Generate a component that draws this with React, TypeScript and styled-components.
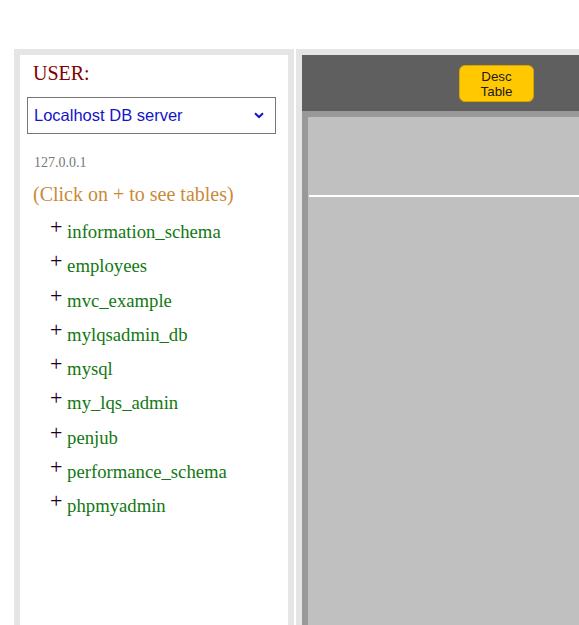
import React from "react";
import styled, { createGlobalStyle } from "styled-components";

const GlobalStyle = createGlobalStyle`
  html, body {
    margin: 0;
    padding: 0;
    background: #ffffff;
    overflow: hidden;
  }
  body {
    font-family: "Liberation Serif", "Times New Roman", serif;
  }
`;

const Page = styled.div`
  padding: 49px 0 0 14px;
  display: flex;
  gap: 2px;
  width: 800px;
  height: 700px;
  box-sizing: border-box;
`;

const Cell = styled.div<{ $width: number }>`
  background: #e5e5e5;
  padding: 6px;
  width: ${(p) => p.$width}px;
  box-sizing: border-box;
  display: flex;
  flex-direction: column;
`;

const Sidebar = styled.div`
  background: #ffffff;
  flex: 1;
  padding: 7px 0 0 0;
  display: flex;
  flex-direction: column;
`;

const UserLabel = styled.div`
  color: #800000;
  font-size: 20px;
  line-height: 23px;
  padding-left: 13px;
`;

const SelectBox = styled.div`
  margin: 12px 0 0 7px;
  width: 249px;
  height: 37px;
  box-sizing: border-box;
  border: 1px solid #767676;
  display: flex;
  align-items: center;
  justify-content: space-between;
  padding: 0 11px 0 6px;
  font-family: "Liberation Sans", Arial, sans-serif;
  font-size: 16.5px;
  color: #1414c8;
`;

const HostText = styled.div`
  color: #777777;
  font-size: 14px;
  line-height: 16px;
  padding-left: 14px;
  margin-top: 21px;
`;

const Hint = styled.div`
  color: #c98a3a;
  font-size: 20px;
  line-height: 23px;
  padding-left: 13px;
  margin-top: 12px;
`;

const DbList = styled.ul`
  list-style: none;
  margin: 4px 0 0 0;
  padding: 0 0 0 30px;
`;

const DbItem = styled.li`
  height: 34.25px;
  font-size: 18.7px;
  line-height: 34.25px;
  white-space: nowrap;
`;

const Plus = styled.span`
  color: #200020;
  font-size: 22px;
  vertical-align: 3.5px;
`;

const DbName = styled.span`
  color: #127812;
`;

const Main = styled.div`
  flex: 1;
  display: flex;
  flex-direction: column;
`;

const Toolbar = styled.div`
  background: #5f5f5f;
  height: 56px;
  box-sizing: border-box;
  padding: 10px 0 0 157px;
  display: flex;
  align-items: flex-start;
`;

const ActionButton = styled.button`
  width: 75px;
  height: 37px;
  box-sizing: border-box;
  background: #ffc800;
  border: 1px solid #d9a300;
  border-radius: 6px;
  font-family: "Liberation Sans", Arial, sans-serif;
  font-size: 13.33px;
  line-height: 15px;
  color: #1a1a1a;
  padding: 2px 4px;
  cursor: pointer;
`;

const Content = styled.div`
  flex: 1;
  background: #c0c0c0;
  border-top: 6px solid #999999;
  border-left: 6px solid #999999;
`;

const ResultTop = styled.div`
  height: 78px;
  margin-left: 1px;
  border-bottom: 2px solid #ffffff;
`;

const databases = [
  "information_schema",
  "employees",
  "mvc_example",
  "mylqsadmin_db",
  "mysql",
  "my_lqs_admin",
  "penjub",
  "performance_schema",
  "phpmyadmin",
];

const Chevron = () => (
  <svg width="10" height="7" viewBox="0 0 10 7" aria-hidden="true">
    <path d="M1 1.2 L5 5 L9 1.2" fill="none" stroke="#1414c8" strokeWidth="2" />
  </svg>
);

export default function App() {
  return (
    <>
      <GlobalStyle />
      <Page>
        <Cell $width={280}>
          <Sidebar>
            <UserLabel>USER:</UserLabel>
            <SelectBox>
              <span>Localhost DB server</span>
              <Chevron />
            </SelectBox>
            <HostText>127.0.0.1</HostText>
            <Hint>(Click on + to see tables)</Hint>
            <DbList>
              {databases.map((db) => (
                <DbItem key={db}>
                  <Plus>+</Plus> <DbName>{db}</DbName>
                </DbItem>
              ))}
            </DbList>
          </Sidebar>
        </Cell>
        <Cell $width={500}>
          <Main>
            <Toolbar>
              <ActionButton>
                Desc
                <br />
                Table
              </ActionButton>
            </Toolbar>
            <Content>
              <ResultTop />
            </Content>
          </Main>
        </Cell>
      </Page>
    </>
  );
}
